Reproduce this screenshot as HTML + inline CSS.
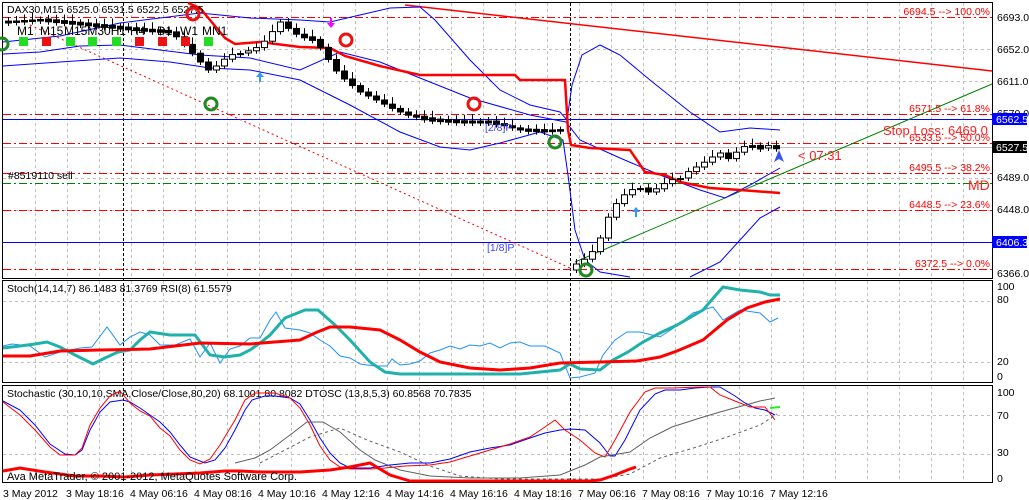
<!DOCTYPE html>
<html><head><meta charset="utf-8"><style>
html,body{margin:0;padding:0;background:#fff;width:1029px;height:500px;overflow:hidden}
svg{display:block}
text{font-family:"Liberation Sans",sans-serif;font-size:10.5px}
</style></head><body>
<svg id="s" width="1029" height="500" xmlns="http://www.w3.org/2000/svg">
<rect width="1029" height="500" fill="#fff"/>
<g id="grid" stroke="#c0c0c0" stroke-dasharray="3,3" stroke-width="1"></g>
<g fill="none" stroke="#000">
<rect x="2.5" y="2.5" width="990" height="276"/>
<rect x="2.5" y="280.5" width="990" height="102"/>
<rect x="2.5" y="385.5" width="990" height="97"/>
</g>
<g stroke="#000" stroke-dasharray="3,2">
<line x1="123.5" y1="3" x2="123.5" y2="483"/>
<line x1="570.5" y1="3" x2="570.5" y2="483"/>
</g>
<g stroke="#ff0000" stroke-width="1" stroke-dasharray="8,3,2,3">
<line x1="3" y1="17.5" x2="992" y2="17.5"/>
<line x1="3" y1="114.5" x2="992" y2="114.5"/>
<line x1="3" y1="143.5" x2="992" y2="143.5"/>
<line x1="3" y1="173.5" x2="992" y2="173.5"/>
<line x1="3" y1="210.5" x2="992" y2="210.5"/>
<line x1="3" y1="269.5" x2="992" y2="269.5"/>
</g>
<line x1="3" y1="147.5" x2="992" y2="147.5" stroke="#c0c0c0"/>
<line x1="3" y1="183.5" x2="992" y2="183.5" stroke="#008000" stroke-dasharray="8,3,2,3"/>
<line x1="3" y1="119.5" x2="992" y2="119.5" stroke="#0000ff"/>
<line x1="3" y1="242.5" x2="992" y2="242.5" stroke="#0000ff"/>
<line x1="405" y1="5" x2="992" y2="71" stroke="#ff0000" stroke-width="1.5"/>
<line x1="575" y1="262" x2="992" y2="84" stroke="#008000"/>
<line x1="30" y1="25" x2="570" y2="268" stroke="#ff0000" stroke-dasharray="2,3"/>
<g fill="none" stroke="#0000ff" stroke-width="1">
<polyline points="3,42 60,36 120,23 200,13 250,18 300,20 330,22 360,15 390,8 420,7 435,20 470,60 500,90 530,105 560,112 567,120 572,85 582,55 600,45 620,55 650,80 690,112 720,132 750,128 780,130"/>
<polyline points="3,54 40,52 80,46 120,45 160,50 200,55 250,58 300,70 340,52 380,62 420,78 470,98 530,115 566,122 580,140 620,158 660,175 700,190 725,198 750,185 780,168"/>
<polyline points="3,66 60,62 120,58 170,62 210,68 250,70 300,80 350,105 400,132 440,147 470,150 500,143 540,132 563,140 568,175 575,230 585,260 600,272 630,277"/>
<polyline points="690,277 720,262 740,240 760,218 780,207"/>
</g>
<polyline fill="none" stroke="#ff0000" stroke-width="2.5" points="188,3 200,8 225,38 235,44 260,42 300,47 330,48 345,56 380,66 420,75 515,75 520,80 565,80 568,130 571,145 590,148 630,150 645,172 665,175 680,182 710,188 740,190 780,193"/>
<g id="candles"></g>
<g>
<text x="997" y="21">6693.0</text>
<text x="997" y="53">6652.0</text>
<text x="997" y="85">6611.0</text>
<text x="997" y="117">6570.0</text>
<text x="997" y="181">6489.0</text>
<text x="997" y="213">6448.0</text>
<text x="997" y="277">6366.0</text>
</g>
<rect x="992" y="113" width="35" height="12" fill="#0000ff"/>
<text x="996" y="123" fill="#fff">6562.5</text>
<rect x="992" y="141" width="35" height="12" fill="#000"/>
<text x="996" y="151" fill="#fff">6527.5</text>
<rect x="992" y="236" width="35" height="12" fill="#0000ff"/>
<text x="996" y="246" fill="#fff">6406.3</text>
<g fill="#ff0000" text-anchor="end">
<text x="990" y="15">6694.5 --&gt; 100.0%</text>
<text x="990" y="112">6571.5 --&gt; 61.8%</text>
<text x="990" y="141">6533.5 --&gt; 50.0%</text>
<text x="990" y="171">6495.5 --&gt; 38.2%</text>
<text x="990" y="208">6448.5 --&gt; 23.6%</text>
<text x="990" y="267">6372.5 --&gt; 0.0%</text>
</g>
<text x="883" y="135" fill="#ff2020" style="font-size:13px">Stop Loss: 6469.0</text>
<text x="798" y="160" fill="#ff2020" style="font-size:13px">&lt; 07:31</text>
<text x="968" y="190" fill="#ff2020" style="font-size:14px">MD</text>
<text x="485" y="131" fill="#4040ff">[2/8]P</text>
<text x="487" y="251" fill="#4040ff">[1/8]P</text>
<text x="8" y="179">#8519110 sell</text>
<text x="7" y="13">DAX30,M15  6525.0 6531.5 6522.5 6527.5</text>
<g fill="#000">
<text x="17" y="35" style="font-size:12px">M1</text>
<text x="40" y="35" style="font-size:12px">M15</text>
<text x="64" y="35" style="font-size:12px">M15M30H1</text>
<text x="130" y="35" style="font-size:12px">H4</text>
<text x="157" y="35" style="font-size:12px">D1</text>
<text x="180" y="35" style="font-size:12px">W1</text>
<text x="202" y="35" style="font-size:12px">MN1</text>
</g>
<g>
<rect x="19" y="37" width="9" height="9" fill="#22dd22"/>
<rect x="42" y="37" width="9" height="9" fill="#ee1111"/>
<rect x="66" y="37" width="9" height="9" fill="#22dd22"/>
<rect x="88" y="37" width="9" height="9" fill="#22dd22"/>
<rect x="112" y="37" width="9" height="9" fill="#22dd22"/>
<rect x="135" y="37" width="9" height="9" fill="#ee1111"/>
<rect x="158" y="37" width="9" height="9" fill="#ee1111"/>
<rect x="181" y="37" width="9" height="9" fill="#ee1111"/>
<rect x="204" y="37" width="9" height="9" fill="#22dd22"/>
</g>
<g stroke-width="3" fill="none">
<circle cx="2" cy="44" r="6" stroke="#228822"/>
<circle cx="211" cy="104" r="6" stroke="#228822"/>
<circle cx="555" cy="142" r="6" stroke="#228822"/>
<circle cx="586" cy="270" r="6" stroke="#228822"/>
<circle cx="193" cy="14" r="6" stroke="#ee1111"/>
<circle cx="346" cy="40" r="6" stroke="#ee1111"/>
<circle cx="474" cy="104" r="6" stroke="#ee1111"/>
</g>
<path d="M260 72 l-4 5 h3 v5 h2 v-5 h3z" fill="#3399ff"/>
<path d="M636 207 l-4 5 h3 v5 h2 v-5 h3z" fill="#3399ff"/>
<path d="M331 28 l-4 -5 h3 v-5 h2 v5 h3z" fill="#ff00ff"/>
<path d="M779 150 l-5 12 l5 -3 l5 3z" fill="#3355ee"/>
<g fill="#000">
<text x="7" y="292">Stoch(14,14,7) 86.1483 81.3769  RSI(8) 61.5579</text>
<text x="997" y="290">100</text><text x="997" y="303">80</text><text x="997" y="365">20</text><text x="997" y="380">0</text>
<text x="7" y="397">Stochastic (30,10,10,SMA,Close/Close,80,20) 68.1001 80.8082  DTOSC (13,8,5,3) 60.8568 70.7835</text>
<text x="997" y="396">100</text><text x="997" y="419">70</text><text x="997" y="456">30</text><text x="997" y="482">0</text>
</g>
<g fill="none">
<polyline stroke="#1e90ff" stroke-width="1" points="3,346 12,344 30,346 45,357 60,352 80,348 92,347 107,327 120,345 130,337 140,332 150,335 160,345 175,345 190,339 200,357 210,343 220,363 230,349 240,346 250,338 260,338 270,320 276,312 285,328 300,330 310,333 320,340 330,346 340,356 350,358 360,364 375,366 387,366 392,359 400,365 410,364 420,361 430,353 440,350 450,346 460,349 470,345 480,346 490,343 500,348 510,343 520,342 530,346 545,346 560,353 570,378 580,377 595,373 603,355 615,340 627,332 640,332 660,337 675,327 693,313 713,307 723,320 740,310 760,313 770,322 778,318"/>
<polyline stroke="#20b2aa" stroke-width="3" points="3,348 20,346 35,344 47,342 60,347 75,355 93,364 105,358 118,352 130,350 140,340 150,332 170,335 195,335 210,355 225,357 240,355 250,350 260,343 270,335 285,318 305,310 318,310 335,325 350,340 370,362 385,372 400,374 440,374 480,374 520,374 560,370 570,364 580,369 600,370 613,360 628,352 643,342 660,333 677,325 703,310 715,296 723,287 740,290 760,292 770,295 780,295"/>
<polyline stroke="#ff0000" stroke-width="3" points="3,356 30,356 60,351 100,350 150,349 200,343 250,344 300,340 315,333 330,327 350,327 380,330 400,340 420,352 440,362 470,368 500,370 530,368 560,363 600,362 637,361 660,357 677,351 703,340 727,320 747,308 765,302 780,299"/>
<polyline stroke="#0000ff" stroke-width="1" points="3,401 20,410 35,425 50,444 65,454 75,455 82,450 90,430 100,412 110,402 123,400 130,402 140,408 150,415 160,422 170,432 180,445 190,457 205,463 215,460 225,448 235,430 245,410 252,400 265,396 275,396 290,398 300,404 310,420 320,438 330,453 340,463 350,468 370,468 390,465 410,463 430,463 450,459 470,452 490,448 510,445 530,438 545,433 560,430 570,429 585,430 600,443 610,456 615,456 625,440 640,410 655,394 665,390 680,390 695,388 710,387 720,387 735,396 745,403 755,408 765,410 775,415"/>
<polyline stroke="#ff0000" stroke-width="1" points="3,402 20,415 35,430 50,447 60,455 75,455 82,448 90,425 100,408 110,396 120,391 130,403 140,411 150,416 160,428 170,436 180,450 190,460 200,464 210,459 220,445 235,420 245,400 255,393 275,393 290,398 300,408 310,425 320,446 330,460 340,467 350,469 370,469 385,468 405,466 430,465 450,462 470,456 490,450 510,444 530,437 545,427 555,420 565,430 580,440 595,453 605,457 615,440 630,412 645,392 655,388 672,388 700,387 710,387 720,395 735,401 750,407 765,407 775,420"/>
<polyline stroke="#606060" stroke-width="1" points="235,463 255,458 270,450 290,435 307,422 323,422 340,432 360,450 375,460 400,470 430,476 470,478 520,478 560,475 585,465 600,457 630,452 650,438 672,427 700,418 720,412 760,401 775,398"/>
<polyline stroke="#606060" stroke-width="1" stroke-dasharray="3,3" points="260,463 285,450 310,437 340,428 367,440 400,452 430,466 460,476 500,479 570,479 600,479 630,474 660,458 700,446 730,436 760,425 777,414"/>
<polyline stroke="#ff0000" stroke-width="3" points="3,471 20,468 45,472 75,476 100,476 125,477 150,475 200,473 225,471 240,471 260,472 300,472 330,470 350,467 370,463 390,475 410,481 440,481 470,481 500,481 530,481 560,481 590,481 600,480 615,475 630,469 636,467"/>
<polyline stroke="#22ee22" stroke-width="2" points="770,408 780,407"/>
</g>
<text x="7" y="480" style="font-size:11px">Ava MetaTrader, © 2001-2012, MetaQuotes Software Corp.</text>
<g>
<text x="3" y="497">3 May 2012</text><text x="66" y="497">3 May 18:16</text><text x="130" y="497">4 May 06:16</text><text x="194" y="497">4 May 08:16</text><text x="258" y="497">4 May 10:16</text><text x="322" y="497">4 May 12:16</text><text x="386" y="497">4 May 14:16</text><text x="450" y="497">4 May 16:16</text><text x="514" y="497">4 May 18:16</text><text x="578" y="497">7 May 06:16</text><text x="642" y="497">7 May 08:16</text><text x="706" y="497">7 May 10:16</text><text x="770" y="497">7 May 12:16</text>
</g>
</svg>
<script>
(function(){
var NS="http://www.w3.org/2000/svg",g=document.getElementById('grid');
function L(x1,y1,x2,y2){var l=document.createElementNS(NS,'line');l.setAttribute('x1',x1);l.setAttribute('y1',y1);l.setAttribute('x2',x2);l.setAttribute('y2',y2);g.appendChild(l);}
for(var x=35.5;x<992;x+=32){L(x,3,x,278);L(x,281,x,382);L(x,386,x,482);}
[49.5,81.5,178.5,210.5,242.5].forEach(function(y){L(3,y,992,y);});
[301.5,362.5,415.5,454.5].forEach(function(y){L(3,y,992,y);});
var pts=[[8,22],[40,20],[80,24],[110,27],[140,30],[170,32],[180,40],[200,62],[210,72],[220,62],[230,55],[245,52],[260,46],[270,34],[280,22],[290,30],[300,37],[315,40],[325,55],[335,70],[345,80],[360,92],[380,102],[395,110],[410,116],[430,120],[460,122],[490,122],[520,130],[545,131],[564,130],[572,266],[580,262],[590,255],[600,238],[610,212],[620,198],[630,190],[640,188],[650,193],[660,186],[670,180],[680,178],[690,170],[700,165],[710,158],[720,153],[730,160],[740,147],[750,146],[760,148],[770,145],[778,150]];
function yAt(x){for(var i=1;i<pts.length;i++){if(x<=pts[i][0]){var a=pts[i-1],b=pts[i];return a[1]+(b[1]-a[1])*(x-a[0])/(b[0]-a[0]);}}return 150;}
var c=document.getElementById('candles'),prev=yAt(6);
for(var x=8;x<=778;x+=8){var y=yAt(x);if(x===568){continue;}if(x===576){prev=270;}
var o=prev,cl=y;if(Math.abs(o-cl)<2){o-=1;cl+=1;}
var top=Math.min(o,cl),bot=Math.max(o,cl);
var w=document.createElementNS(NS,'line');w.setAttribute('x1',x+.5);w.setAttribute('x2',x+.5);w.setAttribute('y1',top-3-((x*7)%5));w.setAttribute('y2',bot+3+((x*3)%6));w.setAttribute('stroke','#000');c.appendChild(w);
var r=document.createElementNS(NS,'rect');r.setAttribute('x',x-2.5);r.setAttribute('y',top);r.setAttribute('width',6);r.setAttribute('height',Math.max(1,bot-top));
r.setAttribute('fill',cl<o?'#fff':'#000');r.setAttribute('stroke','#000');c.appendChild(r);prev=y;}
})();
</script>
</body></html>
